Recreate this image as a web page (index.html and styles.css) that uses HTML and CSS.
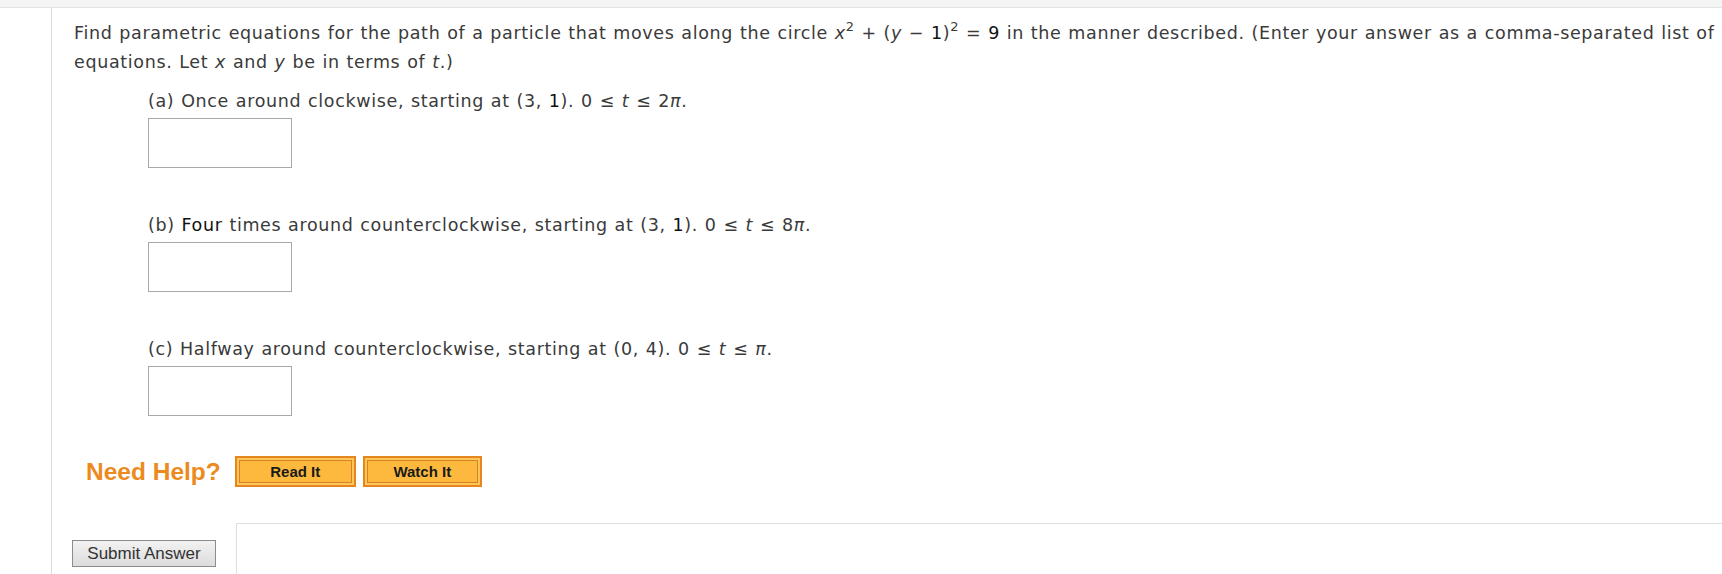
FILE: index.html
```html
<!DOCTYPE html>
<html lang="en">
<head>
<meta charset="utf-8">
<title>Parametric equations</title>
<link rel="stylesheet" href="styles.css">
</head>
<body>
<div class="topband"></div>
<div class="page">
  <div class="gutter"></div>
  <div class="content">
    <p class="question">Find parametric equations for the path of a particle that moves along the circle <i>x</i><sup>2</sup> + (<i>y</i> &minus; <b class="k">1</b>)<sup>2</sup> = <b class="k">9</b> in the manner described. (Enter your answer as a comma-separated list of equations. Let <i>x</i> and <i>y</i> be in terms of <i>t</i>.)</p>

    <div class="part">
      <p class="ptext">(a) Once around clockwise, starting at (3, <span class="k">1</span>). 0 &le; <i>t</i> &le; 2<i>&pi;</i>.</p>
      <div class="answer"></div>
    </div>
    <div class="part">
      <p class="ptext">(b) <span class="k">Four</span> times around counterclockwise, starting at (3, <span class="k">1</span>). 0 &le; <i>t</i> &le; 8<i>&pi;</i>.</p>
      <div class="answer"></div>
    </div>
    <div class="part">
      <p class="ptext">(c) Halfway around counterclockwise, starting at (0, 4). 0 &le; <i>t</i> &le; <i>&pi;</i>.</p>
      <div class="answer"></div>
    </div>

    <div class="help">
      <span class="help-label">Need Help?</span>
      <button class="hbtn hbtn-read">Read It</button>
      <button class="hbtn hbtn-watch">Watch It</button>
    </div>

    <div class="submit-row">
      <button class="submit">Submit Answer</button>
      <div class="notes"></div>
    </div>
  </div>
</div>
</body>
</html>
```

FILE: styles.css
```css
html, body {
  margin: 0;
  padding: 0;
  background: #fff;
}
body {
  font-family: "DejaVu Sans", Verdana, sans-serif;
  color: #3a3a3a;
  overflow: hidden;
  height: 574px;
}
.topband {
  height: 7px;
  background: #f4f4f4;
  border-bottom: 1px solid #e4e4e4;
}
.page {
  display: flex;
  height: 566px;
}
.gutter {
  width: 51px;
  flex: none;
}
.content {
  flex: 1;
  border-left: 1px solid #dcdcdc;
  padding-left: 22px;
  padding-top: 11px;
  min-width: 0;
}
.question {
  margin: 0;
  font-size: 17.5px;
  line-height: 29px;
  letter-spacing: 0.65px;
  word-spacing: 0.6px;
}
.question sup {
  font-size: 13px;
  line-height: 0;
  vertical-align: 8px;
}
.k {
  color: #111;
  font-weight: normal;
}
i {
  font-style: italic;
}
.part {
  margin-left: 74px;
  margin-top: 10px;
}
.part + .part {
  margin-top: 43px;
}
.ptext {
  margin: 0;
  font-size: 17.5px;
  line-height: 29px;
  letter-spacing: 0.65px;
  word-spacing: 0.6px;
}
.answer {
  margin-top: 2px;
  width: 142px;
  height: 48px;
  border: 1px solid #a9a9a9;
  background: #fff;
}
.help {
  display: flex;
  align-items: center;
  gap: 7px;
  margin-top: 40px;
  padding-left: 12px;
  height: 31px;
}
.help-label {
  font-family: "Liberation Sans", Arial, sans-serif;
  font-weight: bold;
  font-size: 24.5px;
  color: #ec8a1e;
  margin-right: 7px;
}
.hbtn {
  height: 31px;
  padding: 0;
  font-family: "Liberation Sans", Arial, sans-serif;
  font-weight: bold;
  font-size: 15px;
  color: #1a1a1a;
  background: #fdb93e;
  border: 2px solid #e5861f;
  box-shadow: inset 0 0 0 2px #fcc65a, inset 0 0 0 3px #d98220;
  cursor: pointer;
}
.hbtn-read {
  width: 121px;
}
.hbtn-watch {
  width: 119px;
}
.submit-row {
  display: flex;
  align-items: flex-start;
  margin-top: 36px;
  margin-left: -2px;
}
.submit {
  margin-top: 17px;
  width: 144px;
  height: 27px;
  padding: 0;
  font-family: "Liberation Sans", Arial, sans-serif;
  font-size: 17px;
  color: #333;
  background: linear-gradient(#f2f2f2, #dcdcdc);
  border: 1px solid #8c8c8c;
  border-radius: 0;
}
.notes {
  flex: 1;
  margin-left: 20px;
  height: 60px;
  border-top: 1px solid #dedede;
  border-left: 1px solid #dedede;
}
```
